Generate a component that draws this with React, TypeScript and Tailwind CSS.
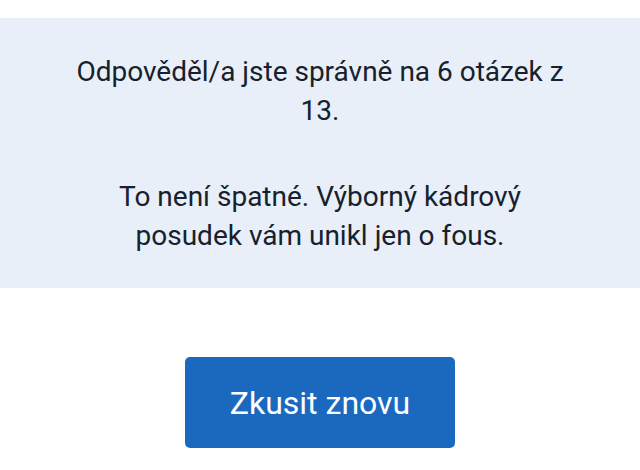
export default function App() {
  return (
    <div className="w-[640px] h-[470px] bg-white pt-[18px] font-['Roboto',sans-serif]">
      <div className="bg-[#e8eff8] px-[74px] pt-[34px] pb-[33px] text-center text-[28px] leading-[39px] text-[#17212e]">
        <p>Odpověděl/a jste správně na 6 otázek z 13.</p>
        <p className="mt-[47px]">To není špatné. Výborný kádrový posudek vám unikl jen o fous.</p>
      </div>
      <div className="flex justify-center mt-[69px]">
        <button className="w-[270px] h-[91px] rounded-[5px] bg-[#1b69bf] text-white text-[32px]">
          Zkusit znovu
        </button>
      </div>
    </div>
  );
}
